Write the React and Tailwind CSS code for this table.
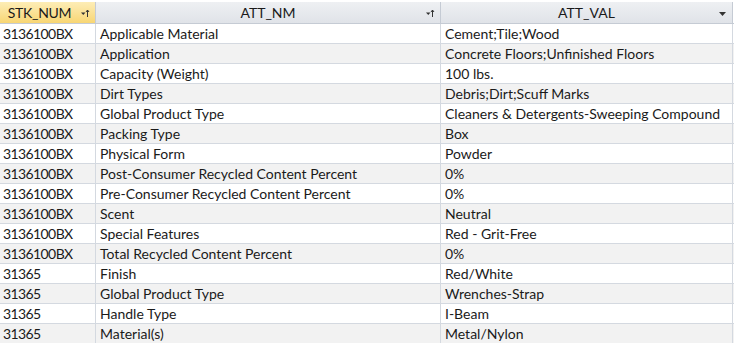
import React from 'react'

const rows = [
  ['3136100BX', 'Applicable Material', 'Cement;Tile;Wood'],
  ['3136100BX', 'Application', 'Concrete Floors;Unfinished Floors'],
  ['3136100BX', 'Capacity (Weight)', '100 lbs.'],
  ['3136100BX', 'Dirt Types', 'Debris;Dirt;Scuff Marks'],
  ['3136100BX', 'Global Product Type', 'Cleaners & Detergents-Sweeping Compound'],
  ['3136100BX', 'Packing Type', 'Box'],
  ['3136100BX', 'Physical Form', 'Powder'],
  ['3136100BX', 'Post-Consumer Recycled Content Percent', '0%'],
  ['3136100BX', 'Pre-Consumer Recycled Content Percent', '0%'],
  ['3136100BX', 'Scent', 'Neutral'],
  ['3136100BX', 'Special Features', 'Red - Grit-Free'],
  ['3136100BX', 'Total Recycled Content Percent', '0%'],
  ['31365', 'Finish', 'Red/White'],
  ['31365', 'Global Product Type', 'Wrenches-Strap'],
  ['31365', 'Handle Type', 'I-Beam'],
  ['31365', 'Material(s)', 'Metal/Nylon'],
]

function SortIcon() {
  return (
    <svg width="9" height="9" viewBox="0 0 9 9" className="shrink-0">
      <path d="M0 3.5h4.5L2.25 6z" fill="#333" />
      <path d="M6.5 1v7" stroke="#333" strokeWidth="1" />
      <path d="M5 3l1.5-2 1.5 2" stroke="#333" strokeWidth="1" fill="none" />
    </svg>
  )
}

function DropIcon() {
  return (
    <svg width="7" height="4" viewBox="0 0 7 4" className="shrink-0">
      <path d="M0 0h7L3.5 4z" fill="#333" />
    </svg>
  )
}

export default function App() {
  const font = { fontFamily: 'Lato, "Liberation Sans", sans-serif' }
  return (
    <div className="w-[734px] h-[343px] bg-white overflow-hidden text-[14px] text-[#1a1a1a]" style={font}>
      <div className="pt-[2px]">
        <div className="grid grid-cols-[96px_345px_292px] h-[22px] border-b border-[#c5cbd4]">
          <div className="relative flex items-center justify-center pr-[16px] bg-gradient-to-b from-[#fdedb6] to-[#f8d673] border-r border-[#c5cbd4]">
            <span className="tracking-[-0.3px]">STK_NUM</span>
            <span className="absolute right-[5px] top-[7px]"><SortIcon /></span>
          </div>
          <div className="relative flex items-center justify-center bg-gradient-to-b from-[#eef0f3] to-[#e0e3e8] border-r border-[#c5cbd4]">
            <span>ATT_NM</span>
            <span className="absolute right-[5px] top-[7px]"><SortIcon /></span>
          </div>
          <div className="relative flex items-center justify-center bg-gradient-to-b from-[#eef0f3] to-[#e0e3e8] border-r border-[#c5cbd4]">
            <span>ATT_VAL</span>
            <span className="absolute right-[6px] top-[10px]"><DropIcon /></span>
          </div>
        </div>
        {rows.map((r, i) => (
          <div
            key={i}
            className={`grid grid-cols-[96px_345px_292px] h-[20px] border-b border-[#d4d9e0] ${i % 2 ? 'bg-[#f2f2f2]' : 'bg-white'}`}
          >
            <div className="pl-[3px] border-r border-[#d4d9e0] leading-[20px] tracking-[-0.6px] whitespace-nowrap overflow-hidden">{r[0]}</div>
            <div className="pl-[4px] border-r border-[#d4d9e0] leading-[20px] whitespace-nowrap overflow-hidden">{r[1]}</div>
            <div className="pl-[4px] border-r border-[#d4d9e0] leading-[20px] whitespace-nowrap overflow-hidden">{r[2]}</div>
          </div>
        ))}
      </div>
    </div>
  )
}
